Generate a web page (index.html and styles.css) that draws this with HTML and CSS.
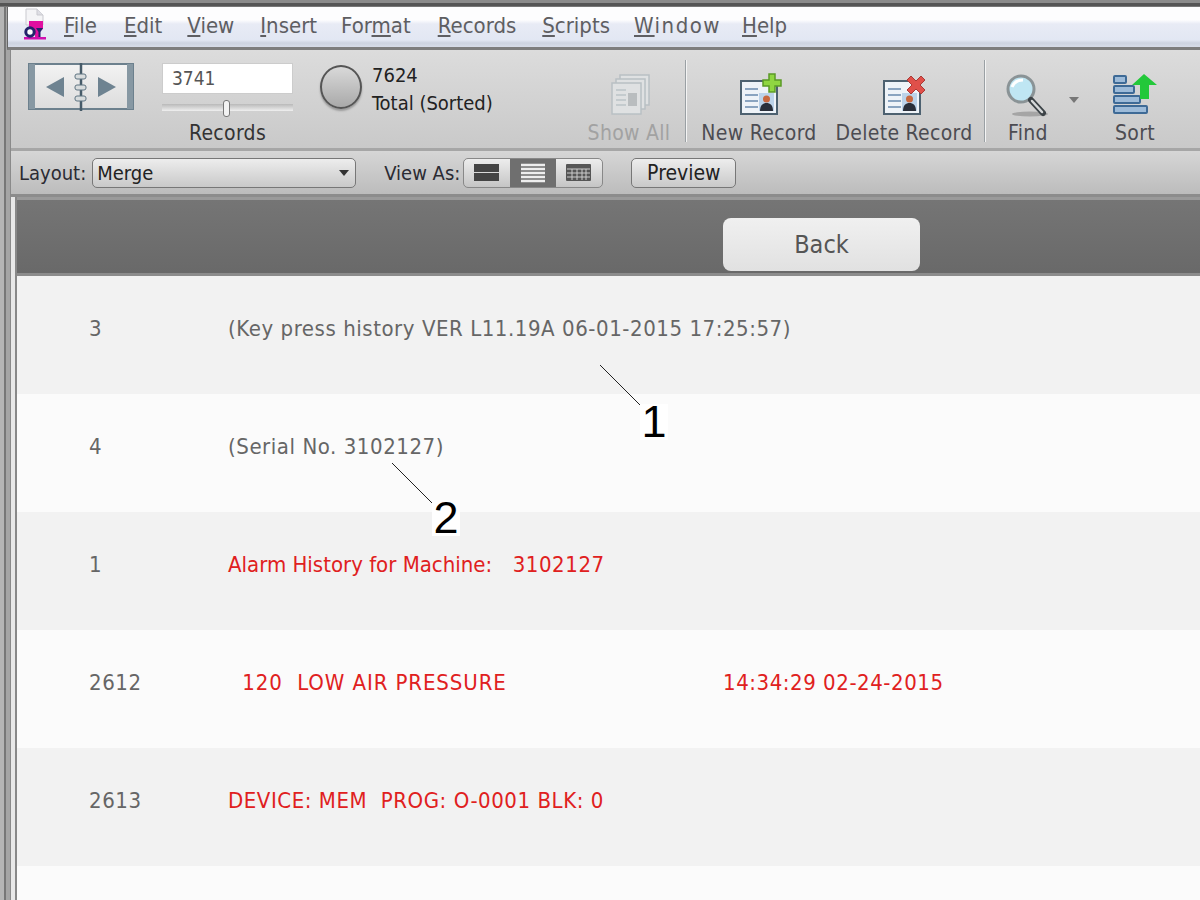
FILE: index.html
```html
<!DOCTYPE html>
<html lang="en">
<head>
<meta charset="utf-8">
<title>Records</title>
<link rel="stylesheet" href="styles.css">
</head>
<body>
<div class="app">
  <div class="topstrip"></div>
  <nav class="menubar">
    <svg class="appicon" width="26" height="32" viewBox="0 0 26 32">
      <path d="M5 1h11l6 6v10H5z" fill="#f4f4f6" stroke="#c9c9cf"/>
      <path d="M16 1v6h6" fill="#dedee4" stroke="#c9c9cf"/>
      <path d="M8 13h14v8l-3 2v6h-5v-6l-3-2-3-2z" fill="#e00fa0"/>
      <rect x="3" y="29" width="22" height="2.5" fill="#d00fb0"/>
      <circle cx="9" cy="24" r="4.2" fill="#fff" stroke="#23236b" stroke-width="3"/>
      <path d="M15 20h7l-2.5 4v5h-2v-5z" fill="#23236b"/>
    </svg>
    <span class="menuitem m-file"><u>F</u>ile</span>
    <span class="menuitem m-edit"><u>E</u>dit</span>
    <span class="menuitem m-view"><u>V</u>iew</span>
    <span class="menuitem m-insert"><u>I</u>nsert</span>
    <span class="menuitem m-format">For<u>m</u>at</span>
    <span class="menuitem m-records"><u>R</u>ecords</span>
    <span class="menuitem m-scripts"><u>S</u>cripts</span>
    <span class="menuitem m-window"><u>W</u>indow</span>
    <span class="menuitem m-help"><u>H</u>elp</span>
  </nav>
  <div class="lower">
    <section class="toolbar">
      <svg class="book" width="106" height="50" viewBox="0 0 106 50">
        <defs>
          <linearGradient id="page" x1="0" y1="0" x2="0" y2="1">
            <stop offset="0" stop-color="#f3f3f3"/>
            <stop offset="1" stop-color="#dcdcdc"/>
          </linearGradient>
        </defs>
        <rect x="1" y="2" width="104" height="46" fill="url(#page)"/>
        <path d="M1 2h104v45H1z" fill="none" stroke="#6c808d" stroke-width="2"/>
        <rect x="1" y="2" width="6" height="45" fill="#8798a3"/>
        <rect x="99" y="2" width="6" height="45" fill="#8798a3"/>
        <path d="M53 1v48" stroke="#465b69" stroke-width="2.500"/>
        <rect x="47" y="12" width="11" height="5" rx="2" fill="#d8dcdd" stroke="#5f7482"/>
        <rect x="47" y="23" width="11" height="5" rx="2" fill="#d8dcdd" stroke="#5f7482"/>
        <rect x="47" y="34" width="11" height="5" rx="2" fill="#d8dcdd" stroke="#5f7482"/>
        <path d="M18 25 36 15v20z" fill="#6e8391"/>
        <path d="M88 25 70 15v20z" fill="#6e8391"/>
      </svg>
      <div class="recordbox">
        <div class="recordinput">3741</div>
        <div class="slider"><span class="thumb"></span></div>
        <div class="toollabel">Records</div>
      </div>
      <div class="pie"></div>
      <div class="stats">
        <div>7624</div>
        <div>Total (Sorted)</div>
      </div>
      <div class="tool tool-showall">
        <svg width="44" height="44" viewBox="0 0 44 44">
          <g fill="#dfe1e2" stroke="#b9c0c4" stroke-width="1.5">
            <rect x="13" y="2" width="29" height="30"/>
            <rect x="9" y="6" width="29" height="30"/>
            <rect x="5" y="10" width="29" height="31"/>
          </g>
          <path d="M9 17h10M9 22h10M9 27h10M9 32h10" stroke="#bcc4c8" stroke-width="1.5"/>
          <rect x="21" y="20" width="9" height="13" fill="#b9bdbf"/>
        </svg>
        <div class="toollabel disabled">Show All</div>
      </div>
      <div class="sep"></div>
      <div class="tool tool-new">
        <svg class="icon-new" width="44" height="44" viewBox="0 0 44 44">
          <rect x="2" y="8" width="36" height="33" fill="#eef3f8" stroke="#4d6170" stroke-width="2"/>
          <path d="M6 16h13M6 22h13M6 28h13M6 34h13" stroke="#8aa4c0" stroke-width="2"/>
          <rect x="20" y="20" width="15" height="18" fill="#bcd3ea"/>
          <circle cx="27.500" cy="26" r="3.500" fill="#c9683f"/>
          <path d="M21 38c0-6 3-8 6.500-8s6.500 2 6.500 8z" fill="#2a2f3a"/>
          <path d="M30 1h6v6h6v6h-6v6h-6v-6h-6V7h6z" fill="#8fd641" stroke="#5b9a26" stroke-width="1.500"/>
        </svg>
        <div class="toollabel">New Record</div>
      </div>
      <div class="tool tool-delete">
        <svg width="44" height="44" viewBox="0 0 44 44">
          <rect x="2" y="8" width="36" height="33" fill="#eef3f8" stroke="#4d6170" stroke-width="2"/>
          <path d="M6 16h13M6 22h13M6 28h13M6 34h13" stroke="#8aa4c0" stroke-width="2"/>
          <rect x="20" y="20" width="15" height="18" fill="#bcd3ea"/>
          <circle cx="27.500" cy="26" r="3.500" fill="#c9683f"/>
          <path d="M21 38c0-6 3-8 6.500-8s6.500 2 6.500 8z" fill="#2a2f3a"/>
          <path d="M29 3l5 5 5-5 4 4-5 5 5 5-4 4-5-5-5 5-4-4 5-5-5-5z" fill="#e0504a" stroke="#a93a36"/>
        </svg>
        <div class="toollabel">Delete Record</div>
      </div>
      <div class="sep sep-2"></div>
      <div class="tool tool-find">
        <svg width="46" height="44" viewBox="0 0 46 44">
          <ellipse cx="25" cy="41" rx="18" ry="2.500" fill="#a5a5a5"/>
          <circle cx="16" cy="16" r="13" fill="#bfe6f3" stroke="#8a9396" stroke-width="3"/>
          <path d="M7 14c2-5 6-7 11-7" stroke="#fff" stroke-width="3" fill="none"/>
          <path d="M26 27l12 13" stroke="#3c4347" stroke-width="6" stroke-linecap="round"/>
          <path d="M27 28l10 11" stroke="#d5d8d9" stroke-width="2.500" stroke-linecap="round"/>
        </svg>
        <div class="toollabel">Find</div>
      </div>
      <span class="caret"></span>
      <div class="tool tool-sort">
        <svg width="46" height="44" viewBox="0 0 46 44">
          <g fill="#9dbbd9" stroke="#3e6a96" stroke-width="2">
            <rect x="2" y="3" width="12" height="7" rx="1"/>
            <rect x="2" y="13" width="20" height="7" rx="1"/>
            <rect x="2" y="23" width="26" height="7" rx="1"/>
            <rect x="2" y="33" width="33" height="7" rx="1"/>
          </g>
          <path d="M32 1l13 11h-8v14h-9V12h-8z" fill="#23c83a"/>
        </svg>
        <div class="toollabel">Sort</div>
      </div>
    </section>
    <section class="layoutbar">
      <span class="barlabel">Layout:</span>
      <div class="select"><span>Merge</span><span class="selcaret"></span></div>
      <span class="barlabel viewas">View As:</span>
      <div class="segment">
        <span class="seg">
          <svg width="26" height="18" viewBox="0 0 26 18"><rect width="25" height="8" fill="#444"/><rect y="9" width="25" height="8" fill="#444"/></svg>
        </span>
        <span class="seg seg-on">
          <svg width="26" height="20" viewBox="0 0 26 20"><path d="M1 2h24M1 6h24M1 10h24M1 14h24M1 18h24" stroke="#eee" stroke-width="2.500"/></svg>
        </span>
        <span class="seg">
          <svg width="26" height="18" viewBox="0 0 26 18"><rect width="25" height="17" rx="1" fill="#555"/><path d="M1 5h23M1 9h23M1 13h23M6 5v11M11 5v11M16 5v11M20 5v11" stroke="#ccc"/></svg>
        </span>
      </div>
      <button class="preview">Preview</button>
    </section>
    <main class="content">
      <header class="listhead"><button class="back">Back</button></header>
      <div class="row odd"><span class="num">3</span><span class="txt">(Key press history VER L11.19A 06-01-2015 17:25:57)</span></div>
      <div class="row"><span class="num">4</span><span class="txt">(Serial No. 3102127)</span></div>
      <div class="row odd red"><span class="num">1</span><span class="txt pre"><span class="tight">Alarm History for Machine:</span>   3102127</span></div>
      <div class="row red"><span class="num">2612</span><span class="txt pre alarm">  120  LOW AIR PRESSURE</span><span class="when">14:34:29 02-24-2015</span></div>
      <div class="row odd red"><span class="num">2613</span><span class="txt pre">DEVICE: MEM  PROG: O-0001 BLK: 0</span></div>
      <div class="row rest"></div>
    </main>
  </div>
</div>
<svg class="leaders" width="1200" height="900" viewBox="0 0 1200 900">
  <path d="M600 365 640 405M392 463 432 503" stroke="#222" stroke-width="1" fill="none"/>
</svg>
<span class="callout c1">1</span>
<span class="callout c2">2</span>
</body>
</html>
```
FILE: styles.css
```css
* { box-sizing: border-box; }
html, body { margin: 0; height: 900px; overflow: hidden; }
body {
  position: relative;
  width: 1200px;
  font-family: "DejaVu Sans Condensed", "DejaVu Sans", sans-serif;
  background: linear-gradient(90deg, #b5b5b5 0 4px, #777 4px 6px, #a5a5a5 6px 10px, #e8e8e8 10px 15px, #888 15px 17px);
  color: #333;
}
.app { display: flex; flex-direction: column; height: 900px; overflow: hidden; }
.topstrip {
  height: 7px;
  flex: none;
  background: linear-gradient(#8b8b8b 0 3px, #555 3px 6px, #777 6px);
}
.menubar {
  height: 43px;
  flex: none;
  margin-left: 7px;
  padding: 0 0 2px 13px;
  display: flex;
  align-items: center;
  border-left: 1px solid #666;
  border-bottom: 3px solid #7d7d7d;
  background: linear-gradient(#fdfdfe 0 13px, #e8ebf5 17px, #e2e7f3 33px, #cdd3e0 36px, #d7dce8 40px);
}
.appicon { flex: none; width: 26px; height: 32px; margin-top: -4px; }
.menuitem {
  font-size: 22px;
  line-height: 26px;
  color: #5e5e62;
  white-space: nowrap;
}
.m-file { margin-left: 17px; }
.m-edit { margin-left: 27px; }
.m-view { margin-left: 25px; }
.m-insert { margin-left: 26px; }
.m-format { margin-left: 24px; }
.m-records { margin-left: 27px; }
.m-scripts { margin-left: 26px; }
.m-window { margin-left: 24px; letter-spacing: 1.500px; }
.m-help { margin-left: 21px; }
.lower {
  flex: 1;
  margin-left: 10px;
  display: flex;
  flex-direction: column;
  min-height: 0;
  border-left: 1px solid #8a8a8a;
}
.toolbar {
  height: 101px;
  flex: none;
  display: flex;
  align-items: flex-start;
  padding-left: 17px;
  background: linear-gradient(#dcdcdc, #c9c9c9);
  border-bottom: 3px solid #a6a6a6;
}
.book { margin-top: 12px; flex: none; }
.recordbox { width: 131px; margin-left: 28px; margin-top: 13px; flex: none; }
.recordinput {
  width: 131px;
  height: 31px;
  background: #fff;
  border: 1px solid #ccc;
  padding-left: 9px;
  font-size: 19px;
  line-height: 28px;
  color: #555;
}
.slider {
  position: relative;
  height: 7px;
  margin-top: 10px;
  background: linear-gradient(#b9b9b9, #efefef);
}
.thumb {
  position: absolute;
  left: 61px;
  top: -4px;
  width: 7px;
  height: 17px;
  border: 1px solid #777;
  border-radius: 3px;
  background: #f2f2f2;
}
.toollabel {
  font-size: 21px;
  letter-spacing: 0.3px;
  line-height: 26px;
  color: #333;
  text-align: center;
  white-space: nowrap;
  padding-top: 1px;
}
.tool .toollabel { color: #4c4c52; }
.recordbox .toollabel { margin-top: 8px; }
.pie {
  flex: none;
  width: 42px;
  height: 44px;
  margin: 15px 0 0 27px;
  border-radius: 50%;
  border: 2px solid #555;
  background: linear-gradient(#d9d9d9, #a9a9a9);
  box-shadow: 0 2px 2px #999;
}
.stats {
  flex: none;
  width: 207px;
  margin: 11px 0 0 10px;
  font-size: 20px;
  line-height: 28px;
  color: #222;
}
.tool {
  flex: none;
  display: flex;
  flex-direction: column;
  align-items: center;
  padding-top: 23px;
}
.tool svg { display: block; height: 44px; margin-bottom: 2px; }
.tool .icon-new { margin-left: 4px; }
.tool-showall { width: 100px; }
.tool .toollabel.disabled { color: #a2a2a2; }
.sep {
  flex: none;
  width: 2px;
  height: 82px;
  margin: 10px 0 0 6px;
  background: linear-gradient(90deg, #9aa0a4 50%, #f4f4f4 50%);
}
.sep-2 { margin-left: 13px; }
.tool-new { width: 116px; margin-left: 14px; }
.tool-delete { width: 134px; margin-left: 20px; }
.tool-find { width: 46px; margin-left: 19px; }
.caret {
  flex: none;
  margin: 47px 0 0 18px;
  width: 0;
  height: 0;
  border: 5px solid transparent;
  border-top: 6px solid #777;
  border-bottom: 0;
}
.tool-sort { width: 46px; margin-left: 33px; }
.layoutbar {
  height: 46px;
  flex: none;
  display: flex;
  align-items: center;
  padding-left: 8px;
  background: linear-gradient(#d6d6d6, #bcbcbc);
  border-bottom: 3px solid #8c8c8c;
}
.barlabel { font-size: 20px; color: #2b2b33; white-space: nowrap; }
.select {
  width: 264px;
  height: 30px;
  margin-left: 6px;
  padding: 0 6px 0 4px;
  display: flex;
  align-items: center;
  justify-content: space-between;
  border: 1px solid #777;
  border-radius: 5px;
  font-size: 20px;
  color: #222;
  background: linear-gradient(#ededed, #c9c9c9);
}
.selcaret {
  width: 0;
  height: 0;
  border: 5px solid transparent;
  border-top: 6px solid #333;
  border-bottom: 0;
}
.viewas { margin-left: 28px; }
.segment {
  display: flex;
  width: 140px;
  height: 30px;
  margin-left: 3px;
  border: 1px solid #888;
  border-radius: 5px;
  overflow: hidden;
  background: linear-gradient(#ededed, #c5c5c5);
}
.seg { flex: 1; display: flex; align-items: center; justify-content: center; }
.seg-on { background: #6f6f6f; }
.preview {
  width: 105px;
  height: 30px;
  margin-left: 28px;
  padding: 0;
  border: 1px solid #777;
  border-radius: 5px;
  font: inherit;
  font-size: 21px;
  color: #222;
  background: linear-gradient(#ededed, #c9c9c9);
}
.content { flex: 1; margin-left: 6px; min-height: 0; background: #f2f2f2; }
.listhead {
  height: 79px;
  display: flex;
  align-items: flex-end;
  padding: 0 0 2px 706px;
  background: linear-gradient(#757575, #696969);
  border-top: 3px solid #9a9a9a;
  border-bottom: 3px solid #8c8c8c;
}
.back {
  width: 197px;
  height: 53px;
  padding: 0;
  border: none;
  border-radius: 8px;
  font: inherit;
  font-size: 25px;
  color: #555;
  background: linear-gradient(#f0f0f0, #e1e1e1);
}
.row {
  height: 118px;
  display: flex;
  align-items: flex-start;
  padding: 39px 0 0 72px;
  background: #fbfbfb;
  font-size: 22px;
  letter-spacing: 0.55px;
  line-height: 28px;
  color: #666;
}
.row.odd { background: #f2f2f2; }
.row.rest { height: 34px; padding: 0; }
.row.red .txt, .row.red .when { color: #e02020; }
.tight { letter-spacing: 0; }
.num { width: 139px; flex: none; color: #666; }
.pre { white-space: pre; }
.alarm { width: 495px; flex: none; letter-spacing: 0.9px; }
.leaders { position: absolute; left: 0; top: 0; pointer-events: none; }
.callout {
  position: absolute;
  background: #fff;
  color: #000;
  font-family: "Liberation Sans", sans-serif;
  font-size: 45px;
  line-height: 36px;
  text-align: center;
  width: 28px;
  height: 36px;
}
.c1 { left: 640px; top: 404px; }
.c2 { left: 432px; top: 500px; }
```
